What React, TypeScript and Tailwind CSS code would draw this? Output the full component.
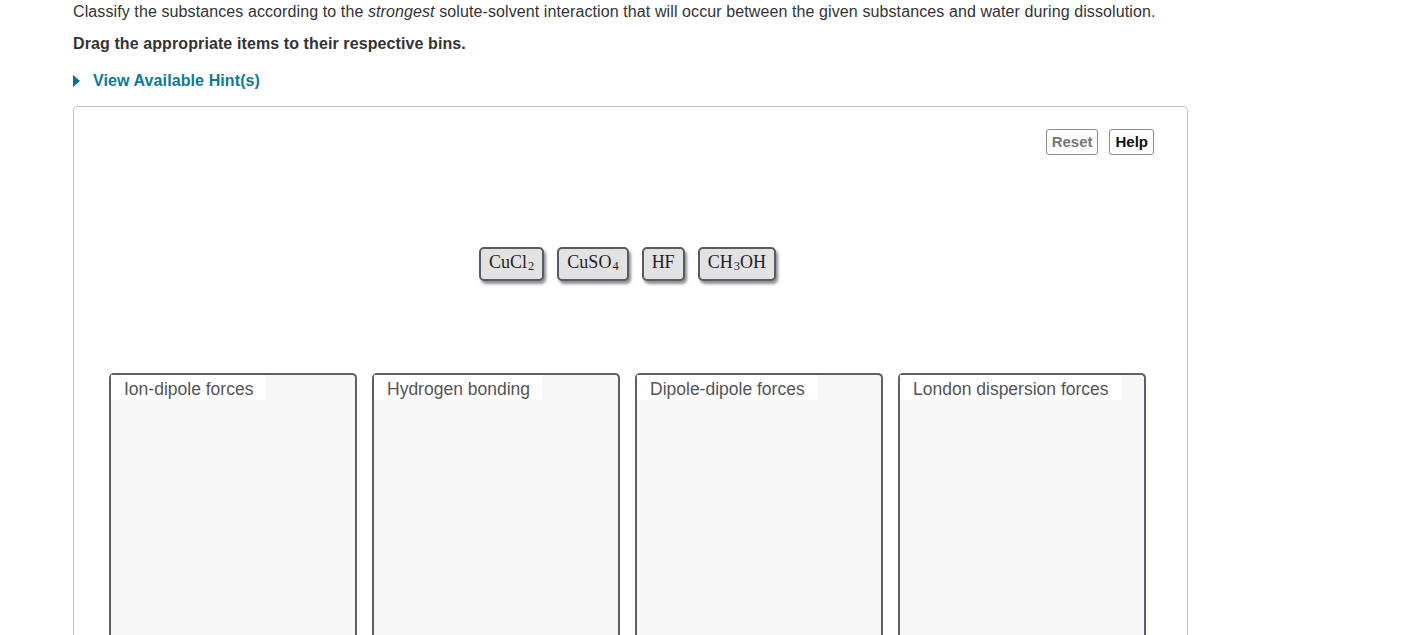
import React from "react";

const Sub = ({ children }: { children: React.ReactNode }) => (
  <span className="text-[12.5px] relative top-[4px] ml-[1px]">{children}</span>
);

const Chip = ({ children }: { children: React.ReactNode }) => (
  <div className="h-[34px] px-[8px] pb-[4px] flex items-center rounded-[5px] border-2 border-[#5a5a66] bg-[#e2e2e2] shadow-[2px_3px_3px_rgba(0,0,0,0.45)] text-[18px] text-[#222] [font-family:'Liberation_Serif',serif] leading-none">
    {children}
  </div>
);

const Bin = ({ label }: { label: string }) => (
  <div className="w-[248px] h-[270px] rounded-t-[5px] border-2 border-b-0 border-[#5f5f6a] bg-[#f7f7f7]">
    <div className="inline-block bg-white pl-[13px] pr-[12px] pt-[3px] h-[25px] text-[17.5px] text-[#555] leading-[22px]">
      {label}
    </div>
  </div>
);

export default function App() {
  return (
    <div className="w-[1413px] h-[635px] overflow-hidden bg-white [font-family:'Liberation_Sans',Arial,sans-serif]">
      <div className="pl-[73px] pt-[3px]">
        <p className="text-[16px] tracking-[0.1px] text-[#333] leading-[18px]">
          Classify the substances according to the <i>strongest</i> solute-solvent interaction that will occur between the given substances and water during dissolution.
        </p>
        <p className="mt-[14px] text-[16px] tracking-[0.1px] font-bold text-[#333] leading-[18px]">
          Drag the appropriate items to their respective bins.
        </p>
        <div className="mt-[19px] flex items-center gap-[13px] text-[#0a7a9a] font-bold text-[16px] tracking-[0.1px] leading-[18px]">
          <svg width="7" height="12" viewBox="0 0 7 12"><path d="M0 0 L7 6 L0 12 Z" fill="#0d6f8f" /></svg>
          <span>View Available Hint(s)</span>
        </div>
        <div className="mt-[16px] w-[1115px] h-[540px] rounded-[5px] border border-[#c4c4c4] border-b-0">
          <div className="flex justify-end gap-[11px] pr-[33px] pt-[22px]">
            <button className="h-[26px] px-[5px] pb-[2px] rounded-[3px] border border-[#8a8a8a] text-[15px] font-bold text-[#777] leading-none">Reset</button>
            <button className="h-[26px] px-[5px] pb-[2px] rounded-[3px] border border-[#8a8a8a] text-[15px] font-bold text-[#111] leading-none">Help</button>
          </div>
          <div className="flex justify-center gap-[13px] mt-[92px] pr-[6px]">
            <Chip>CuCl<Sub>2</Sub></Chip>
            <Chip>CuSO<Sub>4</Sub></Chip>
            <Chip>HF</Chip>
            <Chip>CH<Sub>3</Sub>OH</Chip>
          </div>
          <div className="flex gap-[15px] pl-[35px] mt-[92px]">
            <Bin label="Ion-dipole forces" />
            <Bin label="Hydrogen bonding" />
            <Bin label="Dipole-dipole forces" />
            <Bin label="London dispersion forces" />
          </div>
        </div>
      </div>
    </div>
  );
}
